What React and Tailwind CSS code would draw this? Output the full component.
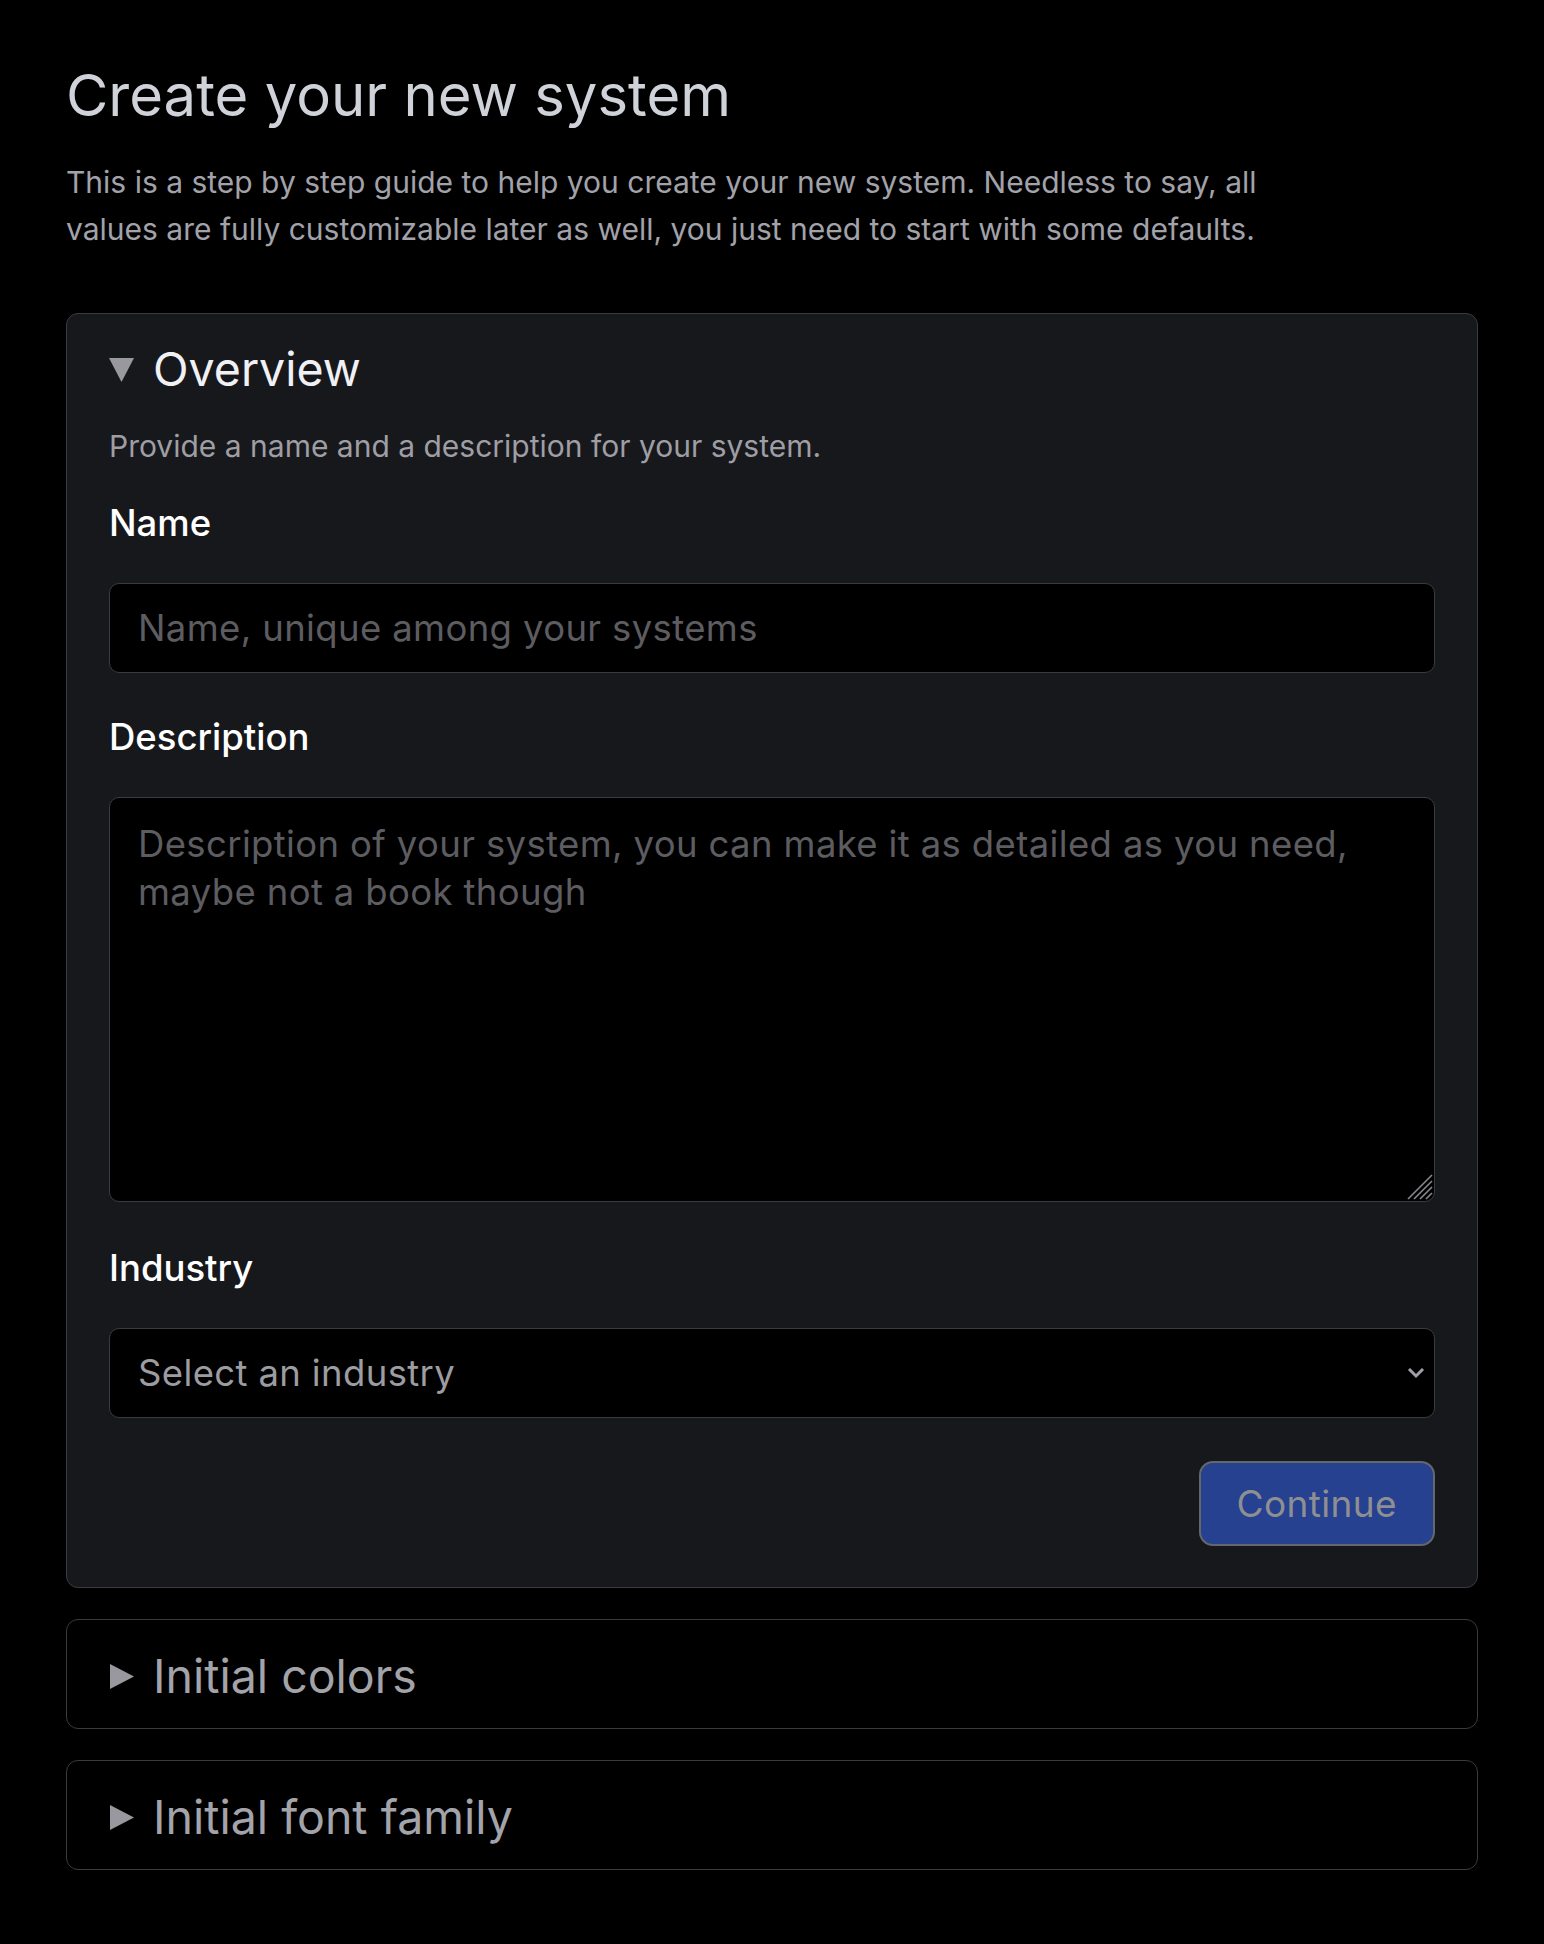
import React from 'react';

const font = { fontFamily: 'Inter, "Noto Sans", sans-serif' };

const Caret = ({ open }) => (
    <svg width="25" height="25" viewBox="0 0 25 25" className="shrink-0">
        {open ? (
            <polygon points="0,1 25,1 12.5,25" fill="#98989e" />
        ) : (
            <polygon points="1,0 25,12.5 1,25" fill="#98989e" />
        )}
    </svg>
);

const Collapsed = ({ title }) => (
    <div className="rounded-[12px] border border-[#3a3b40] bg-black px-[42px] pt-[27px] pb-[23px]">
        <div className="flex items-center gap-[19px]">
            <Caret />
            <h2 className="text-[46.5px] leading-[58px] text-[#a3a3aa]">{title}</h2>
        </div>
    </div>
);

export default function App() {
    return (
        <div className="min-h-screen bg-black px-[66px] pt-[59px] pb-[75px]" style={font}>
            <h1 className="text-[58px] leading-[72px] text-[#cfd2d8]">Create your new system</h1>
            <p className="mt-[28px] max-w-[1240px] text-[30px] leading-[47px] text-[#a2a2aa]">
                This is a step by step guide to help you create your new system. Needless to say, all values are fully customizable later as well, you just need to start with some defaults.
            </p>

            <div className="mt-[60px] flex flex-col gap-[31px]">
                <div className="rounded-[12px] border border-[#3a3b40] bg-[#17181c] px-[42px] pt-[26px] pb-[41px]">
                    <div className="flex items-center gap-[19px]">
                        <Caret open />
                        <h2 className="text-[46.5px] leading-[58px] text-[#f1f1f5]">Overview</h2>
                    </div>
                    <p className="mt-[24px] text-[30px] leading-[48px] text-[#9e9ea4]">Provide a name and a description for your system.</p>

                    <label className="mt-[29px] block text-[36.5px] leading-[48px] font-medium text-white">Name</label>
                    <input
                        type="text"
                        placeholder="Name, unique among your systems"
                        className="mt-[36px] block h-[90px] w-full rounded-[10px] border border-[#3a3b40] bg-black px-[28px] text-[36.5px] leading-[48px] tracking-[0.01em] text-white outline-none placeholder:text-[#5c5c61]"
                    />

                    <label className="mt-[40px] block text-[36.5px] leading-[48px] font-medium text-white">Description</label>
                    <div className="relative mt-[36px]">
                        <textarea
                            placeholder="Description of your system, you can make it as detailed as you need, maybe not a book though"
                            className="block h-[405px] w-full resize-none rounded-[10px] border border-[#3a3b40] bg-black px-[28px] pt-[22px] text-[36.5px] leading-[48px] tracking-[0.01em] text-white outline-none placeholder:text-[#5c5c61]"
                        />
                        <svg width="26" height="26" viewBox="0 0 26 26" className="pointer-events-none absolute right-[2px] bottom-[2px]">
                            <g stroke="#8a8a8e" strokeWidth="1.6">
                                <line x1="1" y1="25" x2="25" y2="1" />
                                <line x1="7" y1="25" x2="25" y2="7" />
                                <line x1="13" y1="25" x2="25" y2="13" />
                                <line x1="19" y1="25" x2="25" y2="19" />
                            </g>
                        </svg>
                    </div>

                    <label className="mt-[42px] block text-[36.5px] leading-[48px] font-medium text-white">Industry</label>
                    <div className="relative mt-[36px]">
                        <select className="block h-[90px] w-full appearance-none rounded-[10px] border border-[#3a3b40] bg-black px-[28px] text-[36.5px] tracking-[0.01em] text-[#9c9ca1] outline-none">
                            <option>Select an industry</option>
                        </select>
                        <svg width="18" height="12" viewBox="0 0 18 12" className="pointer-events-none absolute right-[10px] top-[39px]">
                            <polyline points="2,2 9,9 16,2" fill="none" stroke="#a0a0a6" strokeWidth="3" />
                        </svg>
                    </div>

                    <div className="mt-[43px] flex justify-end">
                        <button className="h-[85px] rounded-[14px] border-2 border-[#66676b] bg-[#25418f] px-[36px] text-[37px] tracking-[0.01em] text-[#8f8f93]">
                            Continue
                        </button>
                    </div>
                </div>

                <Collapsed title="Initial colors" />
                <Collapsed title="Initial font family" />
            </div>
        </div>
    );
}
